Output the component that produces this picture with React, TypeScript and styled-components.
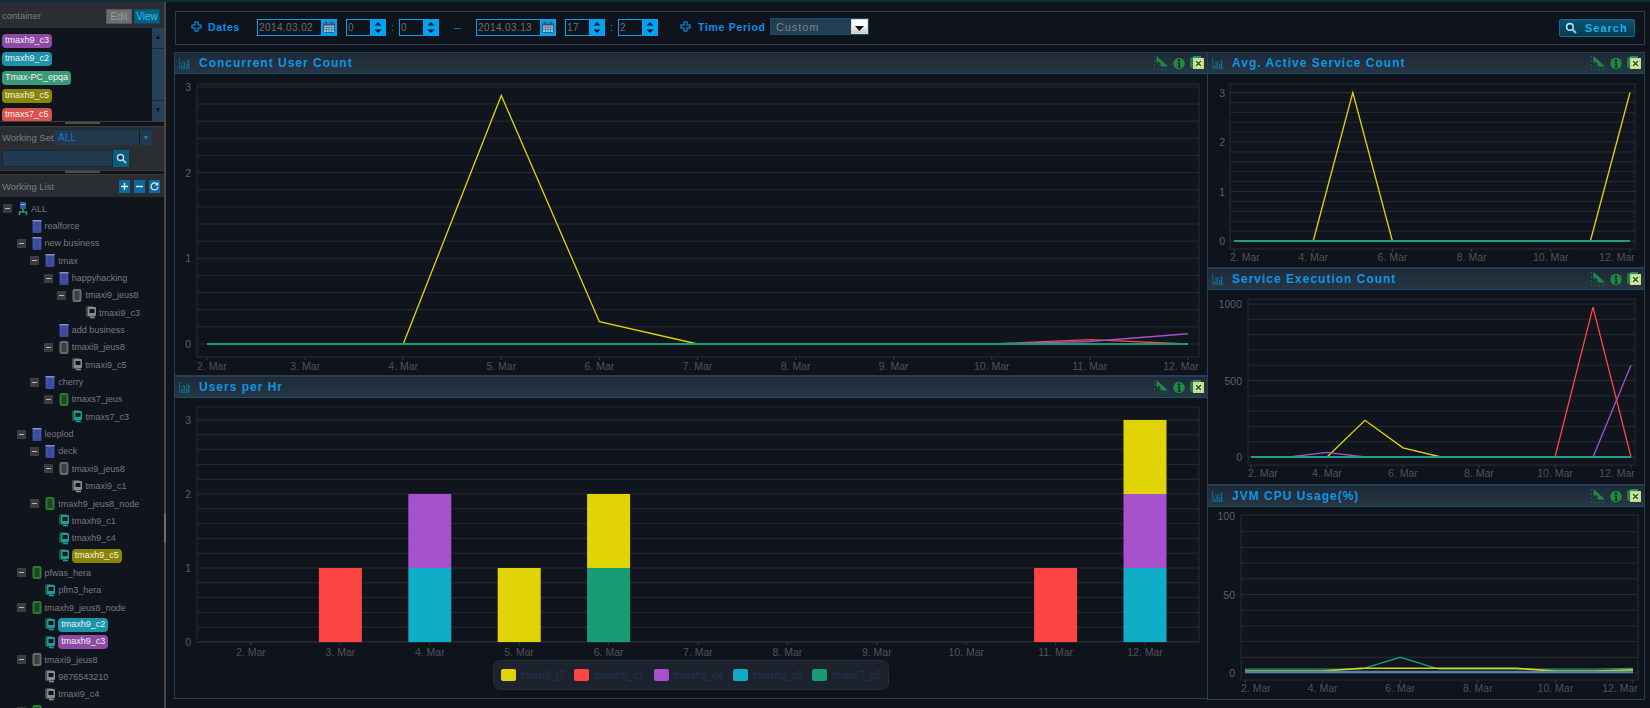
import styled, { createGlobalStyle } from "styled-components";

const GlobalStyle = createGlobalStyle`
  html, body {
    margin: 0;
    padding: 0;
    background: #0f131c;
  }
  * {
    box-sizing: border-box;
  }
`;

const FONT = `"Liberation Sans", Arial, sans-serif`;

const C = {
  yellow: "#e1d406",
  red: "#ff4444",
  purple: "#a552cc",
  cyan: "#0fadc8",
  green: "#179c73",
  base: "#1f9c8a",
};

const Page = styled.div`
  width: 1650px;
  height: 708px;
  display: flex;
  overflow: hidden;
  background: #0f131c;
  border-top: 2px solid #0f2c3c;
  font-family: ${FONT};
`;

/* ---------- sidebar ---------- */

const Sidebar = styled.aside`
  position: relative;
  width: 166px;
  height: 706px;
  flex: none;
  display: flex;
  flex-direction: column;
  border-right: 2px solid #4a4945;

  &::after {
    content: "";
    position: absolute;
    right: -2px;
    top: 511px;
    width: 2px;
    height: 30px;
    background: #6d6c66;
  }
`;

const GreyHead = styled.div`
  height: 26px;
  flex: none;
  display: flex;
  align-items: center;
  background: #2a2e33;
  color: #7b7e80;
  font-size: 9.5px;
  padding: 0 4px 0 2px;
`;

const HeadLabel = styled.span`
  flex: 1;
`;

const ModeButton = styled.span<{ $on?: boolean }>`
  width: 26px;
  height: 15px;
  margin-left: 2px;
  margin-top: 3px;
  line-height: 14px;
  text-align: center;
  font-size: 10px;
  border: 1px solid ${(p) => (p.$on ? "#0d4a66" : "#55595c")};
  background: ${(p) => (p.$on ? "#0b5f82" : "#6c6f71")};
  color: ${(p) => (p.$on ? "#25c4ee" : "#9a9c9d")};
`;

const ContainerBox = styled.div`
  height: 93px;
  flex: none;
  display: flex;
  background: #10141d;
`;

const PillList = styled.div`
  flex: 1;
  padding: 6px 0 0 2px;
  overflow: hidden;
  display: flex;
  flex-direction: column;
  align-items: flex-start;
  gap: 4.4px;
`;

const Pill = styled.span<{ $bg: string }>`
  display: inline-block;
  height: 14px;
  flex: none;
  line-height: 13px;
  padding: 0 3px;
  border-radius: 4px;
  background: ${(p) => p.$bg};
  color: #f2f2f2;
  font-size: 9px;
  white-space: nowrap;
`;

const ScrollTrack = styled.div`
  width: 12px;
  display: flex;
  flex-direction: column;
  background: #1a2a3a;
`;

const ScrollArrow = styled.div`
  height: 20px;
  flex: none;
  background: #24405a;
  color: #0c0f14;
  font-size: 7px;
  line-height: 18px;
  text-align: center;
`;

const ScrollThumb = styled.div`
  flex: 1;
  margin: 1px 0;
  background: #24405a;
`;

const Splitter = styled.div<{ $h: number }>`
  height: ${(p) => p.$h}px;
  flex: none;
  display: flex;
  justify-content: center;
  background: #0f131c;
  border-top: 1px solid #3d3c39;
  border-bottom: 1px solid #3d3c39;

  &::before {
    content: "";
    width: 35px;
    height: 2px;
    background: #4f4e4a;
  }
`;

const WorkingSet = styled.div`
  height: 43px;
  flex: none;
  background: #2a2e33;
  padding: 2px 2px 0;
  display: flex;
  flex-direction: column;
  gap: 5px;
`;

const SetRow = styled.div`
  display: flex;
  align-items: center;
  height: 16px;
`;

const SetLabel = styled.span`
  width: 53px;
  flex: none;
  color: #7b7e80;
  font-size: 9.5px;
  white-space: nowrap;
`;

const SetSelect = styled.div`
  width: 97px;
  height: 16px;
  display: flex;
  align-items: center;
  background: #223a50;
  color: #1a78c0;
  font-size: 10px;
  padding-left: 3px;
  border-top: 1px solid #0e2f40;
`;

const SetValue = styled.span`
  flex: 1;
`;

const SetArrow = styled.span`
  width: 13px;
  height: 15px;
  border-left: 1px solid #10202c;
  color: #1681a8;
  font-size: 7px;
  line-height: 15px;
  text-align: center;
`;

const SearchInput = styled.div`
  width: 111px;
  height: 17px;
  background: #223a50;
  border: 1px solid #0d2d3e;
`;

const SearchBtn = styled.div`
  width: 16px;
  height: 17px;
  display: flex;
  align-items: center;
  justify-content: center;
  background: #0b5f7c;
`;

const ListHead = styled(GreyHead)`
  height: 22px;
`;

const SquareBtn = styled.span`
  width: 11px;
  height: 13px;
  margin-left: 4px;
  background: #0f699c;
  color: #d8f0fa;
  display: flex;
  align-items: center;
  justify-content: center;
`;

const Tree = styled.div`
  flex: 1;
  padding-top: 3px;
  background: #10141d;
  overflow: hidden;
`;

const TreeRow = styled.div<{ $level: number }>`
  height: 17.35px;
  display: flex;
  align-items: center;
  padding-left: ${(p) => 3 + p.$level * 13.6}px;
  color: #777a7d;
  font-size: 9px;
  white-space: nowrap;
`;

const ToggleSlot = styled.span`
  width: 15px;
  flex: none;
  display: flex;
`;

const Toggle = styled.span`
  width: 9px;
  height: 9px;
  background: #3b3c3c;
  display: flex;
  align-items: center;
  justify-content: center;

  &::before {
    content: "";
    width: 5px;
    height: 1px;
    background: #b5b5b5;
  }
`;

const NodeIcon = styled.svg`
  width: 10px;
  height: 13px;
  flex: none;
  margin-right: 3px;
`;

/* ---------- main area ---------- */

const Main = styled.main`
  flex: 1;
  min-width: 0;
  padding: 9px 5px 0 9px;
  display: flex;
  flex-direction: column;
  gap: 7px;
`;

const FilterBar = styled.div`
  height: 34px;
  flex: none;
  display: flex;
  align-items: center;
  padding: 0 9px 3px 15px;
  border: 1px solid #2b3d4c;
`;

const FilterPlus = styled.svg<{ $ml: number; $mr: number }>`
  width: 11px;
  height: 11px;
  margin-left: ${(p) => p.$ml}px;
  margin-right: ${(p) => p.$mr}px;
  flex: none;
`;

const FilterLabel = styled.span<{ $w: number }>`
  width: ${(p) => p.$w}px;
  flex: none;
  color: #0b8fe6;
  font-size: 10.5px;
  font-weight: bold;
  letter-spacing: 0.7px;
  white-space: nowrap;
`;

const Field = styled.div<{ $w: number; $ml?: number }>`
  width: ${(p) => p.$w}px;
  height: 17px;
  margin: 1px 0 0 ${(p) => p.$ml ?? 0}px;
  flex: none;
  display: flex;
  border: 1px solid #00a2f2;
  color: #6d7072;
  font-size: 10px;
  letter-spacing: 0.4px;
  line-height: 15px;
  padding-left: 1px;
`;

const FieldText = styled.span`
  flex: 1;
`;

const FieldCap = styled.span<{ $w: number }>`
  width: ${(p) => p.$w}px;
  flex: none;
  background: #00a2f2;
  display: flex;
  align-items: center;
  justify-content: center;
`;

const Sep = styled.span<{ $w: number }>`
  width: ${(p) => p.$w}px;
  flex: none;
  color: #0b8fe6;
  font-size: 11px;
  text-align: center;
`;

const PeriodSelect = styled.div`
  width: 99px;
  height: 17px;
  flex: none;
  display: flex;
  align-items: center;
  background: #223e54;
  border: 1px solid #0f5166;
  color: #7f8386;
  font-size: 11px;
  letter-spacing: 0.9px;
  padding-left: 5px;
`;

const PeriodArrow = styled.span`
  width: 17px;
  height: 15px;
  margin-left: auto;
  border: 1px solid #d8d8d8;
  background: linear-gradient(#ffffff 40%, #c9c9c9);
  display: flex;
  align-items: flex-end;
  justify-content: center;
  padding-bottom: 2px;
`;

const SearchButton = styled.button`
  margin: 3px 0 0 auto;
  width: 76px;
  height: 18px;
  display: flex;
  align-items: center;
  padding: 0 0 0 5px;
  gap: 8px;
  background: linear-gradient(#0b5574, #0a3850);
  border: 1px solid #0d6c8f;
  border-radius: 2px;
  color: #16b4ec;
  font-family: ${FONT};
  font-size: 11px;
  font-weight: bold;
  letter-spacing: 1px;
`;

const Board = styled.div`
  display: grid;
  grid-template-columns: 1033px 437px;
`;

const Column = styled.div`
  display: flex;
  flex-direction: column;
`;

const Panel = styled.section<{ $h: number }>`
  height: ${(p) => p.$h}px;
  flex: none;
  border: 1px solid #27404f;
  margin-left: -1px;
  overflow: hidden;
  position: relative;
`;

const PanelHead = styled.header`
  height: 21px;
  display: flex;
  align-items: center;
  padding: 0 3px 0 4px;
  background: linear-gradient(#1e2a39, #283543);
  border-bottom: 1px solid #10506a;
`;

const PanelTitle = styled.h2`
  margin: 0 0 0 9px;
  flex: 1;
  color: #0c96e2;
  font-size: 12px;
  font-weight: bold;
  letter-spacing: 1px;
`;

const ToolIcons = styled.div`
  display: flex;
  align-items: center;
  gap: 5px;
`;

const ChartSvg = styled.svg`
  display: block;
  font-family: ${FONT};
`;

const Legend = styled.div`
  position: absolute;
  left: 318px;
  bottom: 8px;
  width: 396px;
  height: 30px;
  display: flex;
  align-items: center;
  gap: 10px;
  padding: 0 0 0 7px;
  border: 1px solid #262c38;
  border-radius: 7px;
  background: #1c222e;
`;

const LegendItem = styled.span`
  display: flex;
  align-items: center;
  gap: 5px;
  color: #1e3552;
  font-size: 10px;
  letter-spacing: 0.05px;
`;

const LegendSwatch = styled.span<{ $bg: string }>`
  width: 15px;
  height: 12px;
  border-radius: 2px;
  background: ${(p) => p.$bg};
`;

/* ---------- drawings ---------- */

const PlusIcon = ({ ml = 0, mr }: { ml?: number; mr: number }) => (
  <FilterPlus $ml={ml} $mr={mr} viewBox="0 0 11 11">
    <path
      d="M4 1h3v3h3v3H7v3H4V7H1V4h3z"
      fill="#0f131c"
      stroke="#0a78b8"
      strokeWidth="1.5"
      strokeLinejoin="round"
    />
  </FilterPlus>
);

const CalendarIcon = () => (
  <svg width="12" height="12" viewBox="0 0 12 12">
    <rect x="0.5" y="2" width="11" height="9.5" rx="1" fill="#9fc2d8" stroke="#2a5a78" />
    <rect x="1" y="2.5" width="10" height="2" fill="#2a5a78" />
    <path d="M3 0.5v3M9 0.5v3" stroke="#21465e" />
    <path d="M1 6.5h10M1 8.5h10M3.5 5v6M6 5v6M8.5 5v6" stroke="#3f7aa0" strokeWidth="0.7" />
  </svg>
);

const SpinArrows = () => (
  <svg width="8" height="13" viewBox="0 0 8 13">
    <path d="M4 1l3.5 3.5h-7zM4 12L0.5 8.5h7z" fill="#0b1a28" />
  </svg>
);

const MagnifierIcon = ({ size = 11 }: { size?: number }) => (
  <svg width={size} height={size} viewBox="0 0 11 11">
    <circle cx="4.5" cy="4.5" r="3" fill="#0b3550" stroke="#b8e2f2" strokeWidth="1.4" />
    <path d="M7 7l3 3" stroke="#7fc8e8" strokeWidth="2" />
  </svg>
);

const ChartIcon = () => (
  <svg width="11" height="11" viewBox="0 0 11 11">
    <path d="M0.5 0v10.5H11" stroke="#0e5f7e" fill="none" />
    <path d="M2 10V7h1.5v3zM4.5 10V5H6v5zM7 10V6h1.5v4zM9 10V3h1.5v7z" fill="#0e6a8c" />
    <path d="M1.5 6L4 3.5 6.5 5 10.5 1" stroke="#0e6a8c" fill="none" />
  </svg>
);

const RulerIcon = () => (
  <svg width="14" height="14" viewBox="0 0 14 14">
    <path d="M0.5 0v13.5H14" fill="none" stroke="#166040" strokeDasharray="2 2" />
    <path d="M2.5 0L14 10.5H7.5L2.5 6z" fill="#1e8a4e" />
    <path d="M4 5l3.5 3.5H4z" fill="#0f3f2a" />
  </svg>
);

const InfoIcon = () => (
  <svg width="12" height="13" viewBox="0 0 12 13">
    <circle cx="6" cy="6.5" r="5.7" fill="#1f8a48" />
    <circle cx="6" cy="3.4" r="1.2" fill="#07200f" />
    <path d="M4.5 5.5h2.4v4.3h1v1H4.5v-1h1V6.5h-1z" fill="#07200f" />
  </svg>
);

const ExcelIcon = () => (
  <svg width="14" height="14" viewBox="0 0 14 14">
    <rect x="0" y="1" width="10" height="11" rx="2" fill="#1f7a50" />
    <rect x="3" y="0" width="8" height="3" fill="#2c8c5c" />
    <rect x="3" y="2" width="11" height="11" fill="#c9dc8a" />
    <rect x="5" y="4" width="7" height="7" fill="#e6eeb0" />
    <path d="M6 5l5 5M11 5l-5 5" stroke="#15602c" strokeWidth="1.6" />
  </svg>
);

const Tools = () => (
  <ToolIcons>
    <RulerIcon />
    <InfoIcon />
    <ExcelIcon />
  </ToolIcons>
);

type NodeKind = "root" | "group" | "server" | "green" | "inst" | "live";

const TreeIcon = ({ kind }: { kind: NodeKind }) => {
  if (kind === "root") {
    return (
      <NodeIcon viewBox="0 0 10 13">
        <rect x="2" y="0" width="6" height="7" fill="#2f5fa8" />
        <path d="M5 7v3M1.5 13v-3h7v3" stroke="#2aa06a" fill="none" strokeWidth="1.5" />
        <rect x="3" y="2" width="4" height="1" fill="#8fb8e0" />
      </NodeIcon>
    );
  }
  if (kind === "group") {
    return (
      <NodeIcon viewBox="0 0 10 13">
        <rect x="0.5" y="0" width="9" height="13" rx="1" fill="#3a4a9c" />
        <rect x="0.5" y="0" width="9" height="1.5" fill="#7f8fd0" />
        <path d="M2 3v8M8 3v8" stroke="#5a6cc0" strokeDasharray="1 1" />
      </NodeIcon>
    );
  }
  if (kind === "server" || kind === "green") {
    const body = kind === "green" ? "#2f7a2c" : "#6a6c6c";
    const face = kind === "green" ? "#1c4a20" : "#3e4040";
    return (
      <NodeIcon viewBox="0 0 10 13">
        <rect x="0.5" y="0" width="9" height="13" rx="2" fill={body} />
        <rect x="2.5" y="2" width="5" height="9" fill={face} />
      </NodeIcon>
    );
  }
  const back = kind === "live" ? "#1d5a38" : "#4e5050";
  const front = kind === "live" ? "#1b9aa0" : "#8a8c8c";
  return (
    <NodeIcon viewBox="0 0 10 13">
      <rect x="0" y="0" width="8" height="11" rx="2" fill={back} />
      <rect x="2" y="1" width="8" height="9" rx="1" fill={front} />
      <rect x="3.5" y="3" width="5" height="4" fill="#10141d" />
      <path d="M4 11.5h5" stroke={front} strokeWidth="1.6" />
    </NodeIcon>
  );
};

/* ---------- chart ---------- */

interface Series {
  color: string;
  values: number[];
  width?: number;
}

interface ChartProps {
  box: [number, number, number, number];
  plot: [number, number, number, number];
  xFirst: number;
  xStep: number;
  xDays: number[];
  labelGap?: number;
  yZero: number;
  yUnit: number;
  yTicks: number[];
  gridStep: number;
  yLabelX: number;
  series?: Series[];
  bars?: { day: number; colors: string[] }[];
  barWidth?: number;
}

const Chart = ({
  box,
  plot,
  xFirst,
  xStep,
  xDays,
  labelGap = 12,
  yZero,
  yUnit,
  yTicks,
  gridStep,
  yLabelX,
  series = [],
  bars = [],
  barWidth = 43,
}: ChartProps) => {
  const [x, y, w, h] = box;
  const [l, r, t, b] = plot;
  const xAt = (day: number) => xFirst + (day - 2) * xStep;
  // end labels are pulled back so they stay inside the plot width
  const labelX = (day: number) => Math.min(Math.max(xAt(day), l + 15), r - 18);
  const lines: number[] = [];
  for (let gy = yZero; gy > t + 1; gy -= gridStep * yUnit) lines.push(gy);

  return (
    <ChartSvg width={w} height={h} viewBox={`${x} ${y} ${w} ${h}`}>
      <rect x={l} y={t} width={r - l} height={b - t} fill="#10141d" stroke="#2a2d33" />
      {lines.map((gy) => (
        <line key={gy} x1={l} x2={r} y1={gy} y2={gy} stroke="#282b32" />
      ))}
      {xDays.map((day) => (
        <line key={day} x1={xAt(day)} x2={xAt(day)} y1={b} y2={b + 3} stroke="#3a3d44" />
      ))}
      {bars.map((bar) =>
        bar.colors.map((color, i) => (
          <rect
            key={i}
            x={xAt(bar.day) - barWidth / 2}
            y={yZero - (i + 1) * yUnit}
            width={barWidth}
            height={yUnit}
            fill={color}
          />
        ))
      )}
      {series.map((s, i) => (
        <polyline
          key={i}
          fill="none"
          stroke={s.color}
          strokeWidth={s.width ?? 1.3}
          points={s.values.map((v, d) => `${xAt(d + 2)},${yZero - v * yUnit}`).join(" ")}
        />
      ))}
      {yTicks.map((v) => (
        <text key={v} x={yLabelX} y={yZero - v * yUnit + 4} textAnchor="end" fontSize="10.5" fill="#5c5f64">
          {v}
        </text>
      ))}
      {xDays.map((day) => (
        <text key={day} x={labelX(day)} y={b + labelGap} textAnchor="middle" fontSize="10.5" fill="#4f5257">
          {day}. Mar
        </text>
      ))}
    </ChartSvg>
  );
};

/* ---------- data ---------- */

const flat = Array(11).fill(0);
const allDays = [2, 3, 4, 5, 6, 7, 8, 9, 10, 11, 12];
const evenDays = [2, 4, 6, 8, 10, 12];

const treeRows: { level: number; toggle?: boolean; kind: NodeKind; label: string; pill?: string }[] = [
  { level: 0, toggle: true, kind: "root", label: "ALL" },
  { level: 1, kind: "group", label: "realforce" },
  { level: 1, toggle: true, kind: "group", label: "new business" },
  { level: 2, toggle: true, kind: "group", label: "tmax" },
  { level: 3, toggle: true, kind: "group", label: "happyhacking" },
  { level: 4, toggle: true, kind: "server", label: "tmaxi9_jeus8" },
  { level: 5, kind: "inst", label: "tmaxi9_c3" },
  { level: 3, kind: "group", label: "add business" },
  { level: 3, toggle: true, kind: "server", label: "tmaxi9_jeus8" },
  { level: 4, kind: "inst", label: "tmaxi9_c5" },
  { level: 2, toggle: true, kind: "group", label: "cherry" },
  { level: 3, toggle: true, kind: "green", label: "tmaxs7_jeus" },
  { level: 4, kind: "live", label: "tmaxs7_c3" },
  { level: 1, toggle: true, kind: "group", label: "leoplod" },
  { level: 2, toggle: true, kind: "group", label: "deck" },
  { level: 3, toggle: true, kind: "server", label: "tmaxi9_jeus8" },
  { level: 4, kind: "inst", label: "tmaxi9_c1" },
  { level: 2, toggle: true, kind: "green", label: "tmaxh9_jeus8_node" },
  { level: 3, kind: "live", label: "tmaxh9_c1" },
  { level: 3, kind: "live", label: "tmaxh9_c4" },
  { level: 3, kind: "live", label: "tmaxh9_c5", pill: "#8a8600" },
  { level: 1, toggle: true, kind: "green", label: "pfwas_hera" },
  { level: 2, kind: "live", label: "pfm3_hera" },
  { level: 1, toggle: true, kind: "green", label: "tmaxh9_jeus8_node" },
  { level: 2, kind: "live", label: "tmaxh9_c2", pill: "#1a93ab" },
  { level: 2, kind: "live", label: "tmaxh9_c3", pill: "#8e4ba6" },
  { level: 1, toggle: true, kind: "server", label: "tmaxi9_jeus8" },
  { level: 2, kind: "inst", label: "9876543210" },
  { level: 2, kind: "inst", label: "tmaxi9_c4" },
  { level: 1, toggle: true, kind: "green", label: "tmaxs7_jeus" },
];

const containers = [
  { label: "tmaxh9_c3", bg: "#8e4ba6" },
  { label: "tmaxh9_c2", bg: "#1a93ab" },
  { label: "Tmax-PC_epqa", bg: "#3a9a78" },
  { label: "tmaxh9_c5", bg: "#8a8600" },
  { label: "tmaxs7_c5", bg: "#d9534f" },
];

const legend = [
  { label: "tmaxi9_j7", color: C.yellow },
  { label: "tmaxh9_c1", color: C.red },
  { label: "tmaxh9_c4", color: C.purple },
  { label: "tmaxh9_c5", color: C.cyan },
  { label: "tmaxs7_c2", color: C.green },
];

const DateField = ({ value, ml }: { value: string; ml?: number }) => (
  <Field $w={80} $ml={ml}>
    <FieldText>{value}</FieldText>
    <FieldCap $w={15}>
      <CalendarIcon />
    </FieldCap>
  </Field>
);

const SpinField = ({ value, ml }: { value: string; ml?: number }) => (
  <Field $w={40} $ml={ml}>
    <FieldText>{value}</FieldText>
    <FieldCap $w={15}>
      <SpinArrows />
    </FieldCap>
  </Field>
);

export default function App() {
  return (
    <Page>
      <GlobalStyle />
      <Sidebar>
        <GreyHead>
          <HeadLabel>container</HeadLabel>
          <ModeButton>Edit</ModeButton>
          <ModeButton $on>View</ModeButton>
        </GreyHead>
        <ContainerBox>
          <PillList>
            {containers.map((c) => (
              <Pill key={c.label} $bg={c.bg}>
                {c.label}
              </Pill>
            ))}
          </PillList>
          <ScrollTrack>
            <ScrollArrow>▲</ScrollArrow>
            <ScrollThumb />
            <ScrollArrow>▼</ScrollArrow>
          </ScrollTrack>
        </ContainerBox>
        <Splitter $h={6} />
        <WorkingSet>
          <SetRow>
            <SetLabel>Working Set</SetLabel>
            <SetSelect>
              <SetValue>ALL</SetValue>
              <SetArrow>▼</SetArrow>
            </SetSelect>
          </SetRow>
          <SetRow>
            <SearchInput />
            <SearchBtn>
              <MagnifierIcon />
            </SearchBtn>
          </SetRow>
        </WorkingSet>
        <Splitter $h={5} />
        <ListHead>
          <HeadLabel>Working List</HeadLabel>
          <SquareBtn>
            <svg width="7" height="7" viewBox="0 0 7 7">
              <path d="M0 3.5h7M3.5 0v7" stroke="currentColor" strokeWidth="1.4" />
            </svg>
          </SquareBtn>
          <SquareBtn>
            <svg width="7" height="7" viewBox="0 0 7 7">
              <path d="M0 3.5h7" stroke="currentColor" strokeWidth="1.4" />
            </svg>
          </SquareBtn>
          <SquareBtn>
            <svg width="9" height="9" viewBox="0 0 9 9">
              <path d="M7.5 2.5A3.5 3.5 0 1 0 8 5M7.8 0.5v2.5H5.3" stroke="currentColor" fill="none" strokeWidth="1.2" />
            </svg>
          </SquareBtn>
        </ListHead>
        <Tree>
          {treeRows.map((row, i) => (
            <TreeRow key={i} $level={row.level}>
              <ToggleSlot>{row.toggle && <Toggle />}</ToggleSlot>
              <TreeIcon kind={row.kind} />
              {row.pill ? <Pill $bg={row.pill}>{row.label}</Pill> : row.label}
            </TreeRow>
          ))}
        </Tree>
      </Sidebar>
      <Main>
        <FilterBar>
          <PlusIcon mr={6} />
          <FilterLabel $w={49}>Dates</FilterLabel>
          <DateField value="2014.03.02" />
          <SpinField value="0" ml={9} />
          <Sep $w={13}>:</Sep>
          <SpinField value="0" />
          <Sep $w={37}>–</Sep>
          <DateField value="2014.03.13" />
          <SpinField value="17" ml={9} />
          <Sep $w={13}>:</Sep>
          <SpinField value="2" />
          <PlusIcon ml={22} mr={7} />
          <FilterLabel $w={72}>Time Period</FilterLabel>
          <PeriodSelect>
            Custom
            <PeriodArrow>
              <svg width="9" height="5" viewBox="0 0 9 5">
                <path d="M0 0h9L4.5 5z" fill="#111" />
              </svg>
            </PeriodArrow>
          </PeriodSelect>
          <SearchButton>
            <MagnifierIcon size={12} />
            Search
          </SearchButton>
        </FilterBar>
        <Board>
          <Column>
            <Panel $h={324}>
              <PanelHead>
                <ChartIcon />
                <PanelTitle>Concurrent User Count</PanelTitle>
                <Tools />
              </PanelHead>
              <Chart
                box={[176, 74, 1031, 301]}
                plot={[198, 1200, 84, 357]}
                xFirst={208}
                xStep={98.1}
                xDays={allDays}
                labelGap={13}
                yZero={344}
                yUnit={85.7}
                yTicks={[0, 1, 2, 3]}
                gridStep={0.2}
                yLabelX={192}
                series={[
                  { color: C.cyan, values: flat },
                  { color: C.yellow, values: [0, 0, 0, 2.9, 0.26, 0, 0, 0, 0, 0, 0] },
                  { color: C.red, values: [0, 0, 0, 0, 0, 0, 0, 0, 0, 0.05, 0] },
                  { color: C.purple, values: [0, 0, 0, 0, 0, 0, 0, 0, 0, 0.03, 0.12], width: 1.5 },
                  { color: C.green, values: flat, width: 2 },
                ]}
              />
            </Panel>
            <Panel $h={323}>
              <PanelHead>
                <ChartIcon />
                <PanelTitle>Users per Hr</PanelTitle>
                <Tools />
              </PanelHead>
              <Chart
                box={[176, 398, 1031, 300]}
                plot={[198, 1200, 407, 642]}
                xFirst={252}
                xStep={89.4}
                xDays={allDays}
                labelGap={14}
                yZero={642}
                yUnit={74}
                yTicks={[0, 1, 2, 3]}
                gridStep={0.2}
                yLabelX={192}
                bars={[
                  { day: 3, colors: [C.red] },
                  { day: 4, colors: [C.cyan, C.purple] },
                  { day: 5, colors: [C.yellow] },
                  { day: 6, colors: [C.green, C.yellow] },
                  { day: 11, colors: [C.red] },
                  { day: 12, colors: [C.cyan, C.purple, C.yellow] },
                ]}
              />
              <Legend>
                {legend.map((item) => (
                  <LegendItem key={item.label}>
                    <LegendSwatch $bg={item.color} />
                    {item.label}
                  </LegendItem>
                ))}
              </Legend>
            </Panel>
          </Column>
          <Column>
            <Panel $h={216}>
              <PanelHead>
                <ChartIcon />
                <PanelTitle>Avg. Active Service Count</PanelTitle>
                <Tools />
              </PanelHead>
              <Chart
                box={[1209, 74, 435, 193]}
                plot={[1231, 1636, 84, 249]}
                xFirst={1235}
                xStep={39.6}
                xDays={evenDays}
                yZero={241}
                yUnit={49.5}
                yTicks={[0, 1, 2, 3]}
                gridStep={0.2}
                yLabelX={1226}
                series={[
                  { color: C.yellow, values: [0, 0, 0, 3, 0, 0, 0, 0, 0, 0, 3] },
                  { color: C.base, values: flat, width: 2 },
                ]}
              />
            </Panel>
            <Panel $h={217}>
              <PanelHead>
                <ChartIcon />
                <PanelTitle>Service Execution Count</PanelTitle>
                <Tools />
              </PanelHead>
              <Chart
                box={[1209, 290, 435, 194]}
                plot={[1249, 1636, 299, 465]}
                xFirst={1252}
                xStep={38}
                xDays={evenDays}
                yZero={457}
                yUnit={0.153}
                yTicks={[0, 500, 1000]}
                gridStep={100}
                yLabelX={1243}
                series={[
                  { color: C.yellow, values: [0, 0, 0, 240, 60, 0, 0, 0, 0, 0, 0] },
                  { color: C.purple, values: [0, 0, 30, 0, 0, 0, 0, 0, 0, 0, 600] },
                  { color: C.red, values: [0, 0, 0, 0, 0, 0, 0, 0, 0, 980, 0] },
                  { color: C.base, values: flat, width: 2 },
                ]}
              />
            </Panel>
            <Panel $h={215}>
              <PanelHead>
                <ChartIcon />
                <PanelTitle>JVM CPU Usage(%)</PanelTitle>
                <Tools />
              </PanelHead>
              <Chart
                box={[1209, 507, 435, 192]}
                plot={[1242, 1639, 515, 680]}
                xFirst={1246}
                xStep={38.8}
                xDays={evenDays}
                yZero={673}
                yUnit={1.57}
                yTicks={[0, 50, 100]}
                gridStep={10}
                yLabelX={1236}
                series={[
                  { color: C.green, values: [2.5, 2.5, 2.5, 2.5, 10, 2.5, 2.5, 2.5, 2.5, 2.5, 3] },
                  { color: C.yellow, values: [1.2, 1.2, 1.2, 3, 3, 3, 3, 3, 1.2, 1.2, 2], width: 1.6 },
                  { color: "#4f7fb8", values: [0.6, 0.6, 0.6, 0.6, 0.6, 0.6, 0.6, 0.6, 0.6, 0.6, 0.6], width: 2.5 },
                ]}
              />
            </Panel>
          </Column>
        </Board>
      </Main>
    </Page>
  );
}
